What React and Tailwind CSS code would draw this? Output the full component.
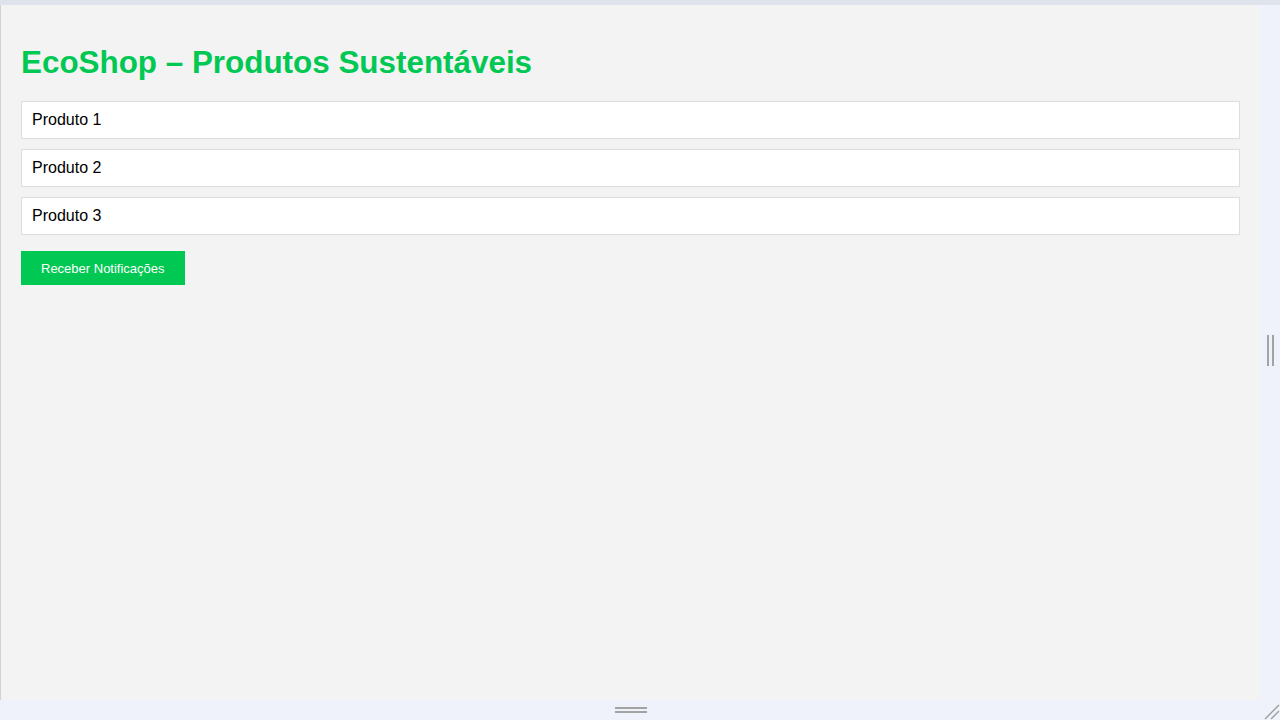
export default function App() {
  const produtos = ['Produto 1', 'Produto 2', 'Produto 3'];

  return (
    <div className="h-screen w-full flex flex-col bg-[#eff2fa] overflow-hidden" style={{ fontFamily: '"Liberation Sans", Arial, sans-serif' }}>
      {/* top edge */}
      <div className="h-[5px] shrink-0 bg-[#dfe4ec]" />

      <div className="flex flex-1 min-h-0">
        {/* preview frame */}
        <div className="w-[1260px] shrink-0 border-l border-[#cfd2d6] bg-[#f3f3f3] p-5">
          <h1 className="text-[31.4px] leading-[36px] font-bold text-[#00c853] mt-5 mb-5">
            EcoShop – Produtos Sustentáveis
          </h1>

          <div className="flex flex-col gap-[10px]">
            {produtos.map(p => (
              <div key={p} className="bg-white border border-[#dddddd] px-[10px] py-[9px] text-[16px] leading-[18px] text-black">
                {p}
              </div>
            ))}
          </div>

          <button className="mt-4 h-[34px] px-5 bg-[#00c853] text-white text-[13px] leading-[15px]">
            Receber Notificações
          </button>
        </div>

        {/* right resize handle */}
        <div className="flex-1 flex items-center justify-center">
          <div className="flex gap-[3px] h-[31px] mb-[4px]">
            <div className="w-[2px] bg-[#a3a3a3]" />
            <div className="w-[2px] bg-[#a3a3a3]" />
          </div>
        </div>
      </div>

      {/* bottom resize handle */}
      <div className="h-[20px] shrink-0 relative flex items-center justify-center">
        <div className="flex flex-col gap-[2px] w-[32px] mr-[18px]">
          <div className="h-[2px] bg-[#a3a3a3]" />
          <div className="h-[2px] bg-[#a3a3a3]" />
        </div>
        <svg className="absolute right-0 bottom-0" width="18" height="18" viewBox="0 0 18 18">
          <line x1="3" y1="17" x2="17" y2="3" stroke="#9e9e9e" strokeWidth="1.5" />
          <line x1="9" y1="17" x2="17" y2="9" stroke="#9e9e9e" strokeWidth="1.5" />
        </svg>
      </div>
    </div>
  );
}
